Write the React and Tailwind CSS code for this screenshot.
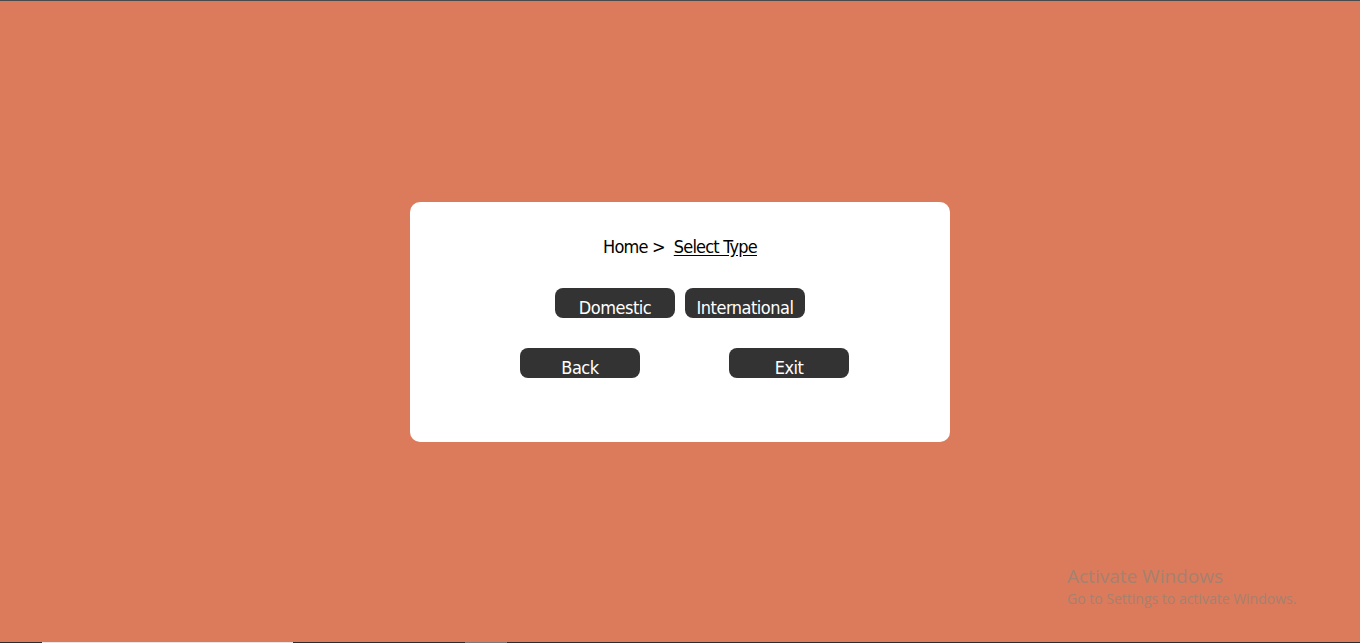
export default function App() {
  const font = { fontFamily: '"DejaVu Sans Condensed", "Liberation Sans Narrow", sans-serif' };
  const btn = "h-[30px] w-[120px] rounded-[8px] bg-[#333] pt-[8px] text-[18px] leading-[24px] tracking-[-0.5px] text-white";
  return (
    <div className="relative h-[643px] w-[1360px] overflow-hidden bg-[#dc7a5c]">
      <div className="h-px w-full bg-[#4a4a4a]" />
      <div className="flex h-[641px] items-center justify-center">
        <div className="flex h-[240px] w-[540px] flex-col items-center rounded-[10px] bg-white pt-[31px]" style={font}>
          <div className="flex items-baseline text-[18px] tracking-[-0.8px] text-black">
            <span>Home &gt;</span>
            <span className="ml-[9px] underline underline-offset-2">Select Type</span>
          </div>
          <div className="mt-[28px] flex gap-[10px]">
            <button className={btn}>Domestic</button>
            <button className={btn}>International</button>
          </div>
          <div className="mt-[30px] ml-[9px] flex gap-[89px]">
            <button className={btn}>Back</button>
            <button className={btn}>Exit</button>
          </div>
        </div>
      </div>
      <div className="absolute left-[1067px] top-[564px] font-['Open_Sans',sans-serif] text-[#a4826f]">
        <div className="text-[19px] leading-[24px]">Activate Windows</div>
        <div className="mt-[2px] text-[14px] leading-[18px]">Go to Settings to activate Windows.</div>
      </div>
      <div className="absolute bottom-0 left-0 flex h-px w-full bg-[#2b2b2b]">
        <div className="ml-[42px] h-px w-[251px] bg-[#e6e6e6]" />
        <div className="ml-[172px] h-px w-[42px] bg-[#7a7a7a]" />
      </div>
    </div>
  );
}
